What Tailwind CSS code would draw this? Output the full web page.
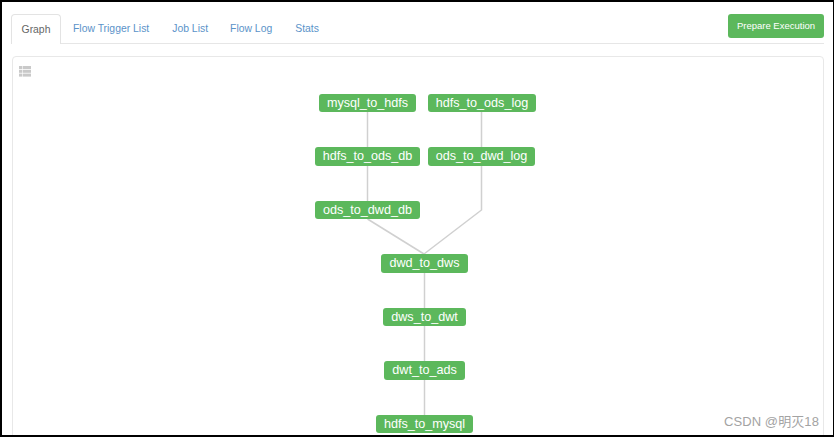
<!DOCTYPE html>
<html lang="en">
<head>
  <meta charset="UTF-8" />
  <title>Flow Graph</title>
  <script src="https://cdn.jsdelivr.net/npm/@tailwindcss/browser@4"></script>
</head>
<body class="bg-black">
  <div class="w-[834px] h-[437px] overflow-hidden pt-[2px] pl-[2px] pr-[1px] pb-[2px] font-['Liberation_Sans',sans-serif]">
    <div class="relative h-full bg-white pt-3 pl-[9px] pr-[9px] overflow-hidden">

      <!-- tabs -->
      <div class="flex items-start justify-between h-[30px] border-b border-[#e6e6e6]">
        <div class="flex text-[10.4px] text-[#5b93c9]">
          <div class="h-[30px] w-[50px] flex items-center justify-center bg-white border border-b-0 border-[#e3e3e3] rounded-t text-[#666]">Graph</div>
          <div class="h-[29px] flex items-center pl-3 pr-3">Flow Trigger List</div>
          <div class="h-[29px] flex items-center px-[11px]">Job List</div>
          <div class="h-[29px] flex items-center pl-[11px] pr-3">Flow Log</div>
          <div class="h-[29px] flex items-center px-[11px]">Stats</div>
        </div>
        <button class="w-[96px] h-[24px] bg-[#5cb85c] text-white text-[9.5px] rounded-[3px]">Prepare Execution</button>
      </div>

      <!-- graph panel -->
      <div class="relative mt-[12px] ml-px h-[400px] border border-[#e8e8e8] rounded-t-sm">
        <svg class="absolute left-[6px] top-[9px]" width="12" height="11" viewBox="0 0 12 11" fill="#c9c9c9">
          <rect x="0" y="0" width="3" height="3" /><rect x="3.6" y="0" width="8.4" height="3" />
          <rect x="0" y="3.8" width="3" height="3" /><rect x="3.6" y="3.8" width="8.4" height="3" />
          <rect x="0" y="7.6" width="3" height="3" /><rect x="3.6" y="7.6" width="8.4" height="3" />
        </svg>

        <!-- edges -->
        <svg class="absolute left-[-13px] top-[-57px]" width="834" height="437" fill="none" stroke="#d0d0d0" stroke-width="1.5">
          <path d="M367.5 112V201" />
          <path d="M481.5 112V210L424 254" />
          <path d="M367.5 219L424 254" />
          <path d="M424.5 254V415" />
        </svg>

        <!-- nodes -->
        <div class="absolute left-[306px] top-[37px] w-[97px] h-[18px] flex items-center justify-center bg-[#5cb85c] text-white text-[12.6px] rounded-[3px]">mysql_to_hdfs</div>
        <div class="absolute left-[415px] top-[37px] w-[108px] h-[18px] flex items-center justify-center bg-[#5cb85c] text-white text-[12.6px] rounded-[3px]">hdfs_to_ods_log</div>
        <div class="absolute left-[302px] top-[90px] w-[105px] h-[19px] flex items-center justify-center bg-[#5cb85c] text-white text-[12.6px] rounded-[3px]">hdfs_to_ods_db</div>
        <div class="absolute left-[415px] top-[90px] w-[107px] h-[19px] flex items-center justify-center bg-[#5cb85c] text-white text-[12.6px] rounded-[3px]">ods_to_dwd_log</div>
        <div class="absolute left-[302px] top-[144px] w-[105px] h-[18px] flex items-center justify-center bg-[#5cb85c] text-white text-[12.6px] rounded-[3px]">ods_to_dwd_db</div>
        <div class="absolute left-[368px] top-[197px] w-[87px] h-[19px] flex items-center justify-center bg-[#5cb85c] text-white text-[12.6px] rounded-[3px]">dwd_to_dws</div>
        <div class="absolute left-[370px] top-[251px] w-[83px] h-[18px] flex items-center justify-center bg-[#5cb85c] text-white text-[12.6px] rounded-[3px]">dws_to_dwt</div>
        <div class="absolute left-[371px] top-[304px] w-[81px] h-[19px] flex items-center justify-center bg-[#5cb85c] text-white text-[12.6px] rounded-[3px]">dwt_to_ads</div>
        <div class="absolute left-[363px] top-[358px] w-[97px] h-[18px] flex items-center justify-center bg-[#5cb85c] text-white text-[12.6px] rounded-[3px]">hdfs_to_mysql</div>
      </div>

      <!-- watermark -->
      <div class="absolute right-[14px] bottom-[5px] text-[13px] tracking-[0.1px] leading-4 text-[#a3a3a3] font-['Liberation_Sans','Noto_Sans_CJK_SC',sans-serif]">CSDN @明灭18</div>
    </div>
  </div>
</body>
</html>
